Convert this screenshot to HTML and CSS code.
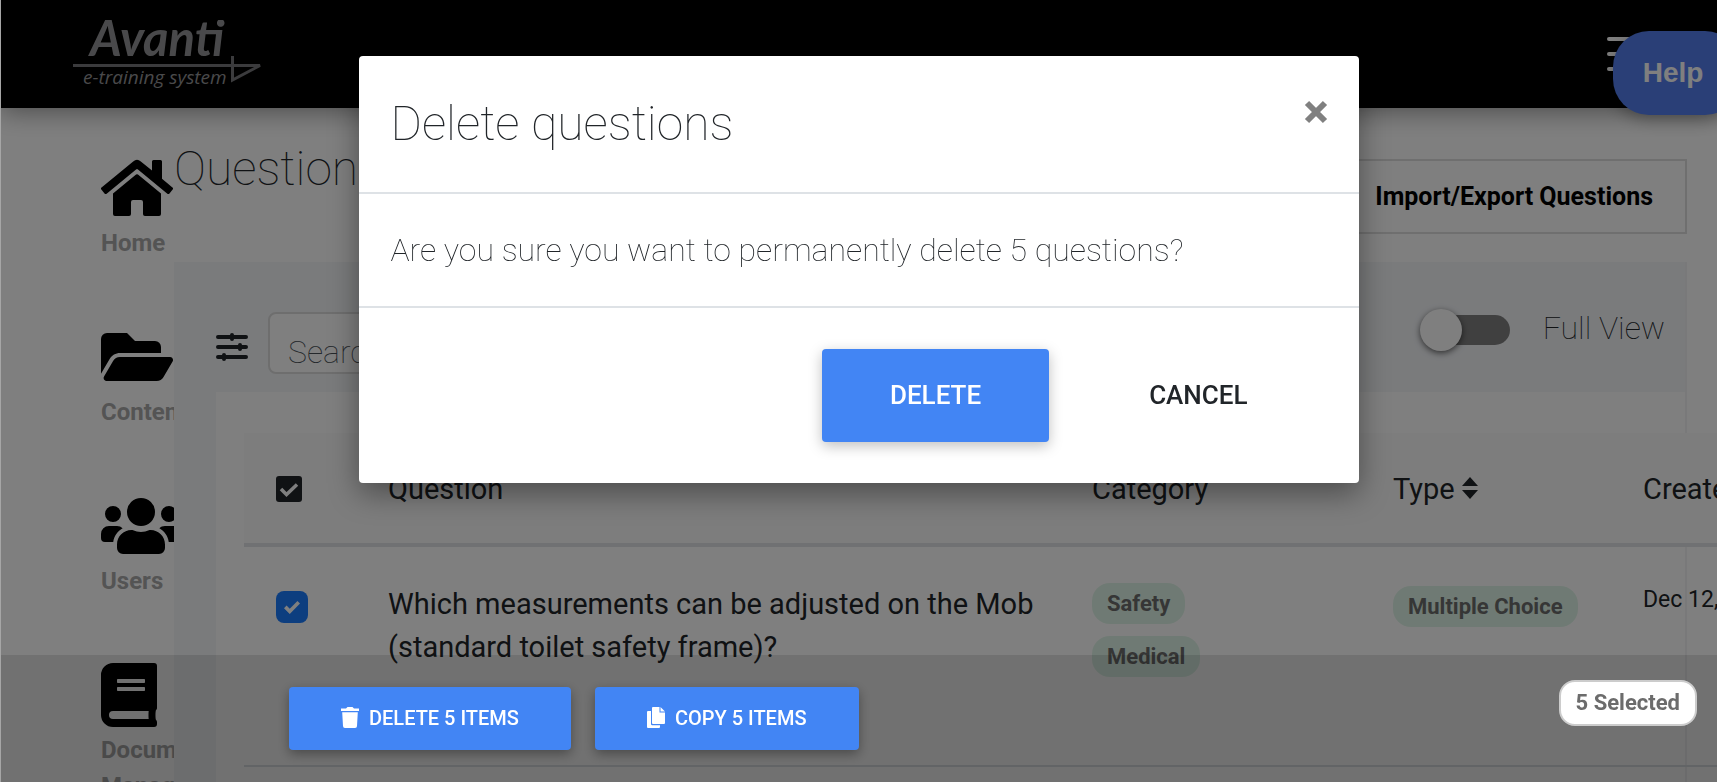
FILE: index.html
```html
<!DOCTYPE html>
<html lang="en">
<head>
<meta charset="utf-8">
<title>Questions - Avanti</title>
<link rel="stylesheet" href="styles.css">
</head>
<body>
<div class="app">
  <header class="topbar">
    <a class="logo" href="#" aria-label="Avanti e-training system">
      <svg width="188" height="68" viewBox="0 0 188 68">
        <text class="logo-name" x="17" y="36">Avanti</text>
        <path d="M0 45.500H187L159.500 60V36" fill="none" stroke="#77777a" stroke-width="3"/>
        <text class="logo-tag" x="10" y="64">e-training system</text>
      </svg>
    </a>
    <button class="menu" aria-label="Menu"><span></span><span></span><span></span></button>
  </header>

  <div class="layout">
    <nav class="sidebar">
      <a class="nav-item" href="#">
        <svg width="72" height="64" viewBox="0 0 576 512"><path d="M280.400 148.300L96 300.100V464a16 16 0 0 0 16 16l112.100-.3a16 16 0 0 0 15.900-16V368a16 16 0 0 1 16-16h64a16 16 0 0 1 16 16v95.600a16 16 0 0 0 16 16.100L464 480a16 16 0 0 0 16-16V300L295.700 148.300a12.200 12.200 0 0 0-15.300 0zM571.600 251.500L488 182.600V44.100a12 12 0 0 0-12-12h-56a12 12 0 0 0-12 12v72.600L318.500 43a48 48 0 0 0-61 0L4.300 251.500a12 12 0 0 0-1.600 16.900l25.500 31A12 12 0 0 0 45.200 301l235.200-193.700a12.200 12.200 0 0 1 15.300 0L530.900 301a12 12 0 0 0 16.900-1.600l25.500-31a12 12 0 0 0-1.700-16.900z"/></svg>
        <span>Home</span>
      </a>
      <a class="nav-item" href="#">
        <svg width="72" height="64" viewBox="0 0 576 512"><path d="M572.700 292.100L500.300 416.200A64 64 0 0 1 445 448H45c-18.500 0-30.100-20.100-20.700-36.100l72.400-124.100A64 64 0 0 1 152 256h400c18.500 0 30.100 20.100 20.700 36.100zM152 224h328v-48a48 48 0 0 0-48-48H272l-64-64H48A48 48 0 0 0 0 112v278.100l69.100-118.400C86.200 242.300 118 224 152 224z"/></svg>
        <span>Content</span>
      </a>
      <a class="nav-item" href="#">
        <svg width="80" height="64" viewBox="0 0 640 512"><path d="M96 224a64 64 0 1 0 0-128 64 64 0 0 0 0 128zm448 0a64 64 0 1 0 0-128 64 64 0 0 0 0 128zm32 32h-64c-17.600 0-33.500 7.100-45.100 18.600 40.300 22.100 68.900 62 75.100 109.400h66a32 32 0 0 0 32-32v-32a64 64 0 0 0-64-64zm-256 0a112 112 0 1 0 0-224 112 112 0 0 0 0 224zm76.800 32h-8.300a154.700 154.700 0 0 1-137 0h-8.300C179.600 288 128 339.600 128 403.200V432a48 48 0 0 0 48 48h288a48 48 0 0 0 48-48v-28.800c0-63.600-51.600-115.200-115.200-115.200zm-223.700-13.400A63.800 63.800 0 0 0 128 256H64a64 64 0 0 0-64 64v32a32 32 0 0 0 32 32h65.900c6.300-47.400 34.900-87.300 75.200-109.400z"/></svg>
        <span>Users</span>
      </a>
      <a class="nav-item" href="#">
        <svg width="56" height="64" viewBox="0 0 448 512"><path d="M448 360V24a24 24 0 0 0-24-24H96A96 96 0 0 0 0 96v320a96 96 0 0 0 96 96h328a24 24 0 0 0 24-24v-16c0-7.500-3.500-14.300-8.900-18.700-4.200-15.400-4.200-59.300 0-74.700 5.400-4.300 8.900-11.100 8.900-18.600zM128 134a6 6 0 0 1 6-6h212a6 6 0 0 1 6 6v20a6 6 0 0 1-6 6H134a6 6 0 0 1-6-6zm0 64a6 6 0 0 1 6-6h212a6 6 0 0 1 6 6v20a6 6 0 0 1-6 6H134a6 6 0 0 1-6-6zm253.400 250H96a32 32 0 0 1 0-64h285.400c-1.900 17.100-1.900 46.900 0 64z"/></svg>
        <span>Document<br>Management</span>
      </a>
    </nav>

    <main class="content">
      <div class="page-head">
        <h1>Questions</h1>
        <button class="outline-btn">Import/Export Questions</button>
      </div>
      <section class="panel">
        <div class="filters">
          <button class="icon-btn" aria-label="Filters">
            <svg width="32" height="28" viewBox="0 0 32 28" fill="none" stroke="#212529" stroke-width="4" stroke-linecap="round"><path d="M2 4H30M2 14H30M2 24H30M16 2V6M24 12V16M8 22V26"/></svg>
          </button>
          <input class="search" type="text" placeholder="Search" aria-label="Search">
          <label class="switch"><input type="checkbox"><span class="track"></span>Full View</label>
        </div>
        <div class="card">
          <table>
            <colgroup><col class="c-check"><col class="c-question"><col class="c-category"><col class="c-type"><col class="c-created"></colgroup>
            <thead>
              <tr>
                <th><button class="select-all" aria-label="Select all"><svg width="26" height="26" viewBox="0 0 26 26"><rect width="26" height="26" rx="3" fill="#212529"/><path d="M5 13L10.500 18.500L21 8.500" fill="none" stroke="#fff" stroke-width="3.500"/></svg></button></th>
                <th>Question</th>
                <th>Category</th>
                <th>Type <svg class="sort" width="16" height="22" viewBox="0 0 16 22"><path d="M0 9L8 0L16 9ZM0 13H16L8 22Z" fill="#212529"/></svg></th>
                <th>Created</th>
              </tr>
            </thead>
            <tbody>
              <tr>
                <td><input class="check" type="checkbox" checked aria-label="Select question"></td>
                <td class="question">Which measurements can be adjusted on the Mob (standard toilet safety frame)?</td>
                <td><div class="tags"><span class="tag">Safety</span><span class="tag">Medical</span></div></td>
                <td class="type"><div class="tags"><span class="tag">Multiple Choice</span></div></td>
                <td class="date">Dec 12, 2022</td>
              </tr>
              <tr><td colspan="5"></td></tr>
            </tbody>
          </table>
        </div>
      </section>
    </main>
  </div>
  <button class="help">Help</button>
</div>

<div class="backdrop"></div>

<footer class="actions">
  <button class="primary">
    <svg width="18" height="21" viewBox="0 0 18 21" fill="#fff"><path d="M0 1.500H5L6.500 0H11.500L13 1.500H18V4H0ZM1.200 5.200H16.800L16 19a2 2 0 0 1-2 2H4a2 2 0 0 1-2-2Z"/></svg>
    DELETE 5 ITEMS</button>
  <button class="primary">
    <svg width="18" height="21" viewBox="0 0 18 21" fill="#fff"><path d="M6 0H12.500V5.500H18V16a1 1 0 0 1-1 1H6a1 1 0 0 1-1-1V1a1 1 0 0 1 1-1ZM13.500 0L18 4.500H13.500ZM1 4H4V17a1.200 1.200 0 0 0 1.200 1.200H13V20a1 1 0 0 1-1 1H1a1 1 0 0 1-1-1V5a1 1 0 0 1 1-1Z"/></svg>
    COPY 5 ITEMS</button>
  <span class="selected">5 Selected</span>
</footer>

<div class="modal" role="dialog" aria-modal="true" aria-labelledby="modal-title">
  <div class="modal-head">
    <h2 id="modal-title">Delete questions</h2>
    <button class="close" aria-label="Close"><svg width="24" height="24" viewBox="0 0 24 24"><path d="M3 3L21 21M21 3L3 21" stroke="#808080" stroke-width="6"/></svg></button>
  </div>
  <p class="modal-body">Are you sure you want to permanently delete 5 questions?</p>
  <div class="modal-foot">
    <button class="confirm">DELETE</button>
    <button class="cancel">CANCEL</button>
  </div>
</div>
</body>
</html>
```
FILE: styles.css
```css
* { box-sizing: border-box; }
body {
  margin: 0;
  height: 100vh;
  overflow: hidden;
  background: #fff;
  color: #212529;
  font-family: Roboto, "Liberation Sans", sans-serif;
}
button {
  margin: 0;
  padding: 0;
  border: 0;
  background: none;
  color: inherit;
  font-family: inherit;
}
svg { display: block; flex: none; }

.app {
  height: 100vh;
  overflow: hidden;
  border-left: 1px solid #a6a6a6;
}
.topbar {
  position: relative;
  display: flex;
  align-items: center;
  justify-content: space-between;
  height: 108px;
  padding: 0 74px 0 72px;
  background: #000;
  box-shadow: 0 4px 24px rgba(0, 0, 0, .4);
}
.logo-name {
  font: italic 700 49px Lato, sans-serif;
  fill: #939396;
}
.logo-tag {
  font: italic 500 19px "Open Sans", sans-serif;
  fill: #939396;
}
.menu {
  display: flex;
  flex-direction: column;
  gap: 11px;
  width: 36px;
}
.menu span {
  height: 4px;
  border-radius: 2px;
  background: #fff;
}
.help {
  position: absolute;
  top: 31px;
  right: -24px;
  width: 128px;
  height: 84px;
  padding-right: 8px;
  border-radius: 36px;
  background: #547fef;
  box-shadow: 0 4px 16px rgba(0, 0, 0, .3);
  color: #fff;
  font: bold 28px "Liberation Sans", sans-serif;
}

.layout { display: flex; }
.sidebar {
  flex: 0 0 173px;
  display: flex;
  flex-direction: column;
  gap: 64px;
  padding: 48px 0 0 100px;
  overflow: hidden;
}
.nav-item {
  display: block;
  color: #a8a8a8;
  font-size: 24px;
  font-weight: 700;
  line-height: 36px;
  text-decoration: none;
}
.nav-item svg { fill: #000; }
.nav-item span { display: block; margin-top: 5px; white-space: nowrap; }
.content {
  flex: 1;
  min-width: 0;
  padding-right: 30px;
}
.page-head {
  display: flex;
  justify-content: space-between;
  align-items: flex-start;
  padding: 33px 0 28px;
}
h1, h2 {
  margin: 0;
  font-size: 48px;
  font-weight: 100;
  line-height: 56px;
}
.outline-btn {
  margin-top: 18px;
  height: 75px;
  padding: 0 32px;
  border: 2px solid #dedede;
  color: #000;
  font-size: 25px;
  font-weight: 700;
}
.panel {
  border-right: 2px solid #f3f3f4;
  background: #f4f6f9;
}
.filters {
  display: flex;
  align-items: center;
  gap: 20px;
  height: 130px;
  padding: 0 20px 0 42px;
}
.icon-btn { margin-top: 40px; }
.search {
  width: 600px;
  height: 62px;
  margin-top: 32px;
  padding: 18px 18px 0;
  border: 2px solid #dcdcdc;
  border-radius: 8px;
  background: #fff;
  font: 100 32px Roboto, sans-serif;
}
.search::placeholder { color: #495057; opacity: 1; }
.switch {
  display: flex;
  align-items: center;
  gap: 33px;
  margin: 2px 0 0 auto;
  font-size: 32px;
  font-weight: 100;
}
.switch input { position: absolute; opacity: 0; }
.track {
  display: flex;
  align-items: center;
  width: 82px;
  height: 30px;
  margin-top: 4px;
  border-radius: 15px;
  background: #818181;
}
.track::before {
  content: "";
  width: 42px;
  height: 42px;
  margin-left: -8px;
  border-radius: 50%;
  background: #fff;
  box-shadow: 0 2px 6px rgba(0, 0, 0, .6);
}
.card {
  margin-left: 42px;
  padding: 41px 0 0 28px;
  background: #fff;
}
table {
  width: 1700px;
  table-layout: fixed;
  border-collapse: collapse;
}
.c-check { width: 112px; }
.c-question { width: 704px; }
.c-category { width: 301px; }
.c-type { width: 250px; }
th {
  height: 112px;
  padding: 2px 32px 0;
  border-bottom: 4px solid #e0e3e6;
  background: #fafafa;
  font-size: 29px;
  font-weight: 400;
  text-align: left;
}
td {
  padding: 36px 32px;
  border-bottom: 2px solid #dee2e6;
  vertical-align: top;
}
tbody tr { height: 221px; }
.select-all { display: block; }
.sort { display: inline-block; }
.check {
  appearance: none;
  display: block;
  width: 32px;
  height: 32px;
  margin: 8px 0 0;
  border-radius: 8px;
  background: #1a7cff;
}
.check::before {
  content: "";
  display: block;
  width: 16px;
  height: 13px;
  margin: 10px 8px;
  background: #fff;
  clip-path: polygon(0 55%, 16% 35%, 36% 60%, 84% 0, 100% 20%, 36% 100%);
}
.question { padding-right: 16px; font-size: 29px; line-height: 43px; }
.type { padding-top: 39px; }
.date { font-size: 23px; line-height: 34px; white-space: nowrap; }
.tags {
  display: flex;
  flex-direction: column;
  align-items: flex-start;
  gap: 12px;
}
.tag {
  padding: 0 15px;
  border-radius: 18px;
  background: #dff5e8;
  color: #6c6c6c;
  font-size: 22px;
  font-weight: 700;
  line-height: 41px;
}

.backdrop {
  position: fixed;
  inset: 0 0 0 1px;
  background: rgba(0, 0, 0, .5);
}
.actions {
  position: fixed;
  inset: auto 0 0 1px;
  display: flex;
  align-items: flex-start;
  gap: 24px;
  height: 127px;
  padding: 32px 20px 0 288px;
  background: rgba(0, 0, 0, .11);
}
.primary {
  display: flex;
  align-items: center;
  gap: 10px;
  height: 63px;
  padding: 0 52px 2px;
  border-radius: 4px;
  background: #4285f4;
  box-shadow: 0 4px 12px rgba(0, 0, 0, .35);
  color: #fff;
  font-size: 20px;
  font-weight: 500;
}
.selected {
  align-self: flex-start;
  margin: -7px 0 0 auto;
  padding: 0 15px;
  border: 2px solid #ccc;
  border-radius: 16px;
  background: #fff;
  color: #6c6c6c;
  font-size: 22px;
  font-weight: 700;
  line-height: 42px;
}

.modal {
  position: fixed;
  top: 56px;
  left: 50%;
  width: 1000px;
  margin-left: -500px;
  border-radius: 4px;
  background: #fff;
  box-shadow: 0 10px 30px rgba(0, 0, 0, .4);
}
.modal-head {
  display: flex;
  justify-content: space-between;
  align-items: flex-start;
  padding: 40px 31px 40px 32px;
  border-bottom: 2px solid #dee2e6;
}
.close { margin-top: 4px; }
.modal-body {
  margin: 0;
  padding: 32px;
  border-bottom: 2px solid #dee2e6;
  font-size: 32px;
  font-weight: 100;
  line-height: 48px;
}
.modal-foot {
  display: flex;
  justify-content: flex-end;
  gap: 32px;
  padding: 41px 43px;
}
.modal-foot button {
  height: 93px;
  padding: 0 68px 2px;
  border-radius: 4px;
  font-size: 26px;
  font-weight: 500;
}
.modal-foot .confirm {
  background: #4285f4;
  box-shadow: 0 4px 14px rgba(0, 0, 0, .25);
  color: #fff;
}
```
